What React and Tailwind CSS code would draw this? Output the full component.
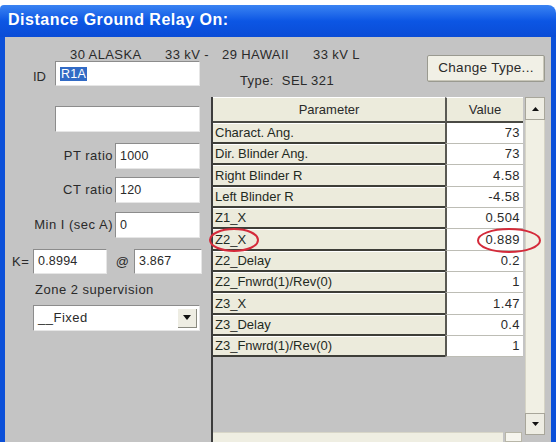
import React from "react";

const rows = [
  ["Charact. Ang.", "73", "h-[21px]"],
  ["Dir. Blinder Ang.", "73", "h-[21px]"],
  ["Right Blinder R", "4.58", "h-[22px]"],
  ["Left Blinder R", "-4.58", "h-[21px]"],
  ["Z1_X", "0.504", "h-[21px]"],
  ["Z2_X", "0.889", "h-[22px]"],
  ["Z2_Delay", "0.2", "h-[21px]"],
  ["Z2_Fnwrd(1)/Rev(0)", "1", "h-[21px]"],
  ["Z3_X", "1.47", "h-[22px]"],
  ["Z3_Delay", "0.4", "h-[21px]"],
  ["Z3_Fnwrd(1)/Rev(0)", "1", "h-[21px]"],
];

function Field({ className = "", children }) {
  return (
    <div
      className={
        "bg-white border border-t-[#8c8c8c] border-l-[#8c8c8c] border-b-[#e6e6e6] border-r-[#e6e6e6] flex items-center px-[4px] text-[12.5px] tracking-[0.2px] text-[#2a2a2a] " +
        className
      }
    >
      {children}
    </div>
  );
}

export default function App() {
  return (
    <div className="w-[559px] h-[442px] bg-white overflow-hidden font-['Liberation_Sans',Arial,sans-serif] text-[#2a2a2a]">
      <div className="mt-[5px] w-[556px] h-[437px] flex flex-col">
        {/* title bar */}
        <div className="h-[32px] rounded-tr-[8px] rounded-tl-[4px] bg-gradient-to-b from-[#3a83f2] via-[#0c56e4] to-[#0a4cd6] flex items-center pl-[8px] pb-[3px]">
          <span className="text-white font-bold text-[16px] tracking-[0.5px]">Distance Ground Relay On:</span>
        </div>
        {/* body */}
        <div className="relative flex-1 bg-[#c4c4c4] border-l-[5px] border-r-[5px] border-l-[#0b50d9] border-r-[#0b50d9] flex flex-col">
          {/* top section */}
          <div className="h-[60px] flex justify-between">
            <div className="flex flex-col">
              <div className="pt-[11px] pl-[65px] h-[24px] flex text-[13px] tracking-[0.4px] leading-[14px]">
                <span className="w-[95px]">30 ALASKA</span>
                <span className="w-[57px]">33 kV -</span>
                <span className="w-[91px]">29 HAWAII</span>
                <span>33 kV L</span>
              </div>
              <div className="flex items-start">
                <span className="ml-[28px] w-[22px] text-[13px] mt-[6px]">ID</span>
                <Field className="w-[145px] h-[25px]">
                  <span className="bg-[#316ac5] text-white px-[1px] leading-[14px]">R1A</span>
                </Field>
                <span className="ml-[40px] mt-[10px] text-[13px] tracking-[0.4px]">Type:&nbsp;&nbsp;SEL 321</span>
              </div>
            </div>
            <div className="mt-[18px] mr-[6px] w-[118px] h-[27px] bg-[#f1f0e6] border border-[#9a9a90] rounded-[2px] shadow-[inset_-1px_-1px_0_#c8c6b8] flex items-center justify-center text-[13.5px] tracking-[0.3px]">
              Change Type...
            </div>
          </div>
          {/* main row */}
          <div className="flex flex-1 min-h-0">
            {/* left panel */}
            <div className="w-[206px] flex flex-col text-[13px] tracking-[0.5px]">
              <Field className="ml-[50px] mt-[9px] w-[145px] h-[26px]" />
              <div className="mt-[11px] flex justify-end items-center pr-[11px] gap-[2px]">
                <span>PT ratio</span>
                <Field className="w-[85px] h-[26px]">1000</Field>
              </div>
              <div className="mt-[8px] flex justify-end items-center pr-[11px] gap-[2px]">
                <span>CT ratio</span>
                <Field className="w-[85px] h-[26px]">120</Field>
              </div>
              <div className="mt-[9px] flex justify-end items-center pr-[11px] gap-[2px]">
                <span>Min I (sec A)</span>
                <Field className="w-[85px] h-[26px]">0</Field>
              </div>
              <div className="mt-[11px] flex items-center">
                <span className="ml-[7px] w-[21px]">K=</span>
                <Field className="w-[74px] h-[25px]">0.8994</Field>
                <span className="ml-[4px] w-[23px] text-center">@</span>
                <Field className="w-[68px] h-[25px]">3.867</Field>
              </div>
              <div className="mt-[9px] ml-[30px] leading-[14px]">Zone 2 supervision</div>
              <div className="mt-[8px] ml-[28px] w-[167px] h-[26px] bg-white border border-t-[#8c8c8c] border-l-[#8c8c8c] border-b-[#e6e6e6] border-r-[#e6e6e6] flex items-center justify-between pl-[4px] pr-[2px]">
                <span>__Fixed</span>
                <div className="w-[19px] h-[19px] bg-[#eeede3] border-r border-b border-[#8a8a80] flex items-center justify-center">
                  <svg width="8" height="5" viewBox="0 0 8 5"><path d="M0 0h8L4 5z" fill="#111" /></svg>
                </div>
              </div>
            </div>
            {/* table */}
            <div className="w-[334px] flex border-l-2 border-l-[#3c3c3c] bg-[#c4c4c4]">
              <div className="w-[310px] flex flex-col">
                <div className="flex h-[26px]">
                  <div className="w-[232px] bg-[#ecebdc] border-t border-t-white border-b-2 border-b-[#4a4a44] flex items-center justify-center text-[13px]">Parameter</div>
                  <div className="w-[78px] bg-[#ecebdc] border-l-2 border-l-[#5a5a54] border-t border-t-white border-b-2 border-b-[#4a4a44] flex items-center justify-center text-[13px]">Value</div>
                </div>
                {rows.map(([p, v, h]) => (
                  <div key={p} className={"flex " + h}>
                    <div className="w-[232px] bg-[#ecebdc] border-t border-t-white border-b-2 border-b-[#3e3e38] flex items-center pl-[2px] text-[13px] text-[#1f2a1f]">{p}</div>
                    <div className="w-[78px] bg-white border-l-2 border-l-[#5a5a54] border-b border-b-[#bdbdb5] flex items-center justify-end pr-[3px] text-[13px] tracking-[0.4px] text-[#2a2a2a]">{v}</div>
                  </div>
                ))}
                <div className="flex-1" />
                <div className="h-[10px] flex">
                  <div className="w-[290px] bg-[#efeee2] border-t border-t-[#d8d6c8]" />
                  <div className="ml-[2px] w-[17px] bg-[#f6f5ee] border border-[#b8b6a8]" />
                </div>
              </div>
              <div className="ml-[2px] w-[20px] flex flex-col mb-[7px]">
                <div className="h-[23px] bg-[#eeede3] border border-[#a8a69a] flex items-center justify-center">
                  <svg width="7" height="4" viewBox="0 0 7 4"><path d="M0 4h7L3.5 0z" fill="#111" /></svg>
                </div>
                <div className="flex-1 bg-[#f1f0e4] border-x border-[#d6d4c6]" />
                <div className="h-[22px] bg-[#eeede3] border border-[#a8a69a] flex items-center justify-center">
                  <svg width="7" height="4" viewBox="0 0 7 4"><path d="M0 0h7L3.5 4z" fill="#111" /></svg>
                </div>
              </div>
            </div>
          </div>
          {/* red annotation ellipses */}
          <svg className="absolute left-[203px] top-[190px] pointer-events-none" width="54" height="26" viewBox="0 0 54 26">
            <ellipse cx="26" cy="13" rx="24" ry="11" fill="none" stroke="#d42a3a" strokeWidth="2" />
          </svg>
          <svg className="absolute left-[471px] top-[190px] pointer-events-none" width="68" height="27" viewBox="0 0 68 27">
            <ellipse cx="33" cy="13.5" rx="31" ry="11.5" fill="none" stroke="#d42a3a" strokeWidth="2" />
          </svg>
        </div>
      </div>
    </div>
  );
}
